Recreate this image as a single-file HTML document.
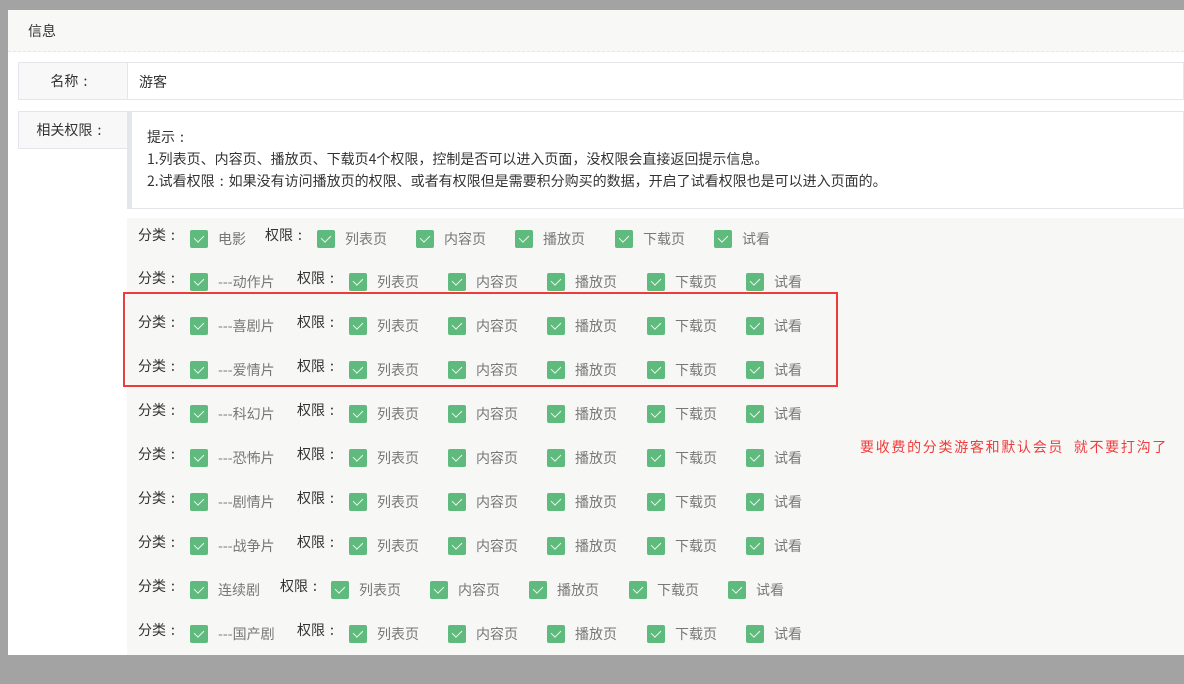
<!DOCTYPE html>
<html><head><meta charset="utf-8"><style>
*{margin:0;padding:0;box-sizing:border-box}
body{width:1184px;height:684px;background:#a3a3a3;position:relative;overflow:hidden;font-family:"Noto Sans CJK SC","Liberation Sans",sans-serif;font-size:14px;color:#333}
.a{position:absolute;white-space:nowrap}
b{display:inline-block;width:14px;text-align:center;font-weight:normal}
#dlg{position:absolute;left:8px;top:10px;width:1176px;height:645px;background:#fff}
#hd{position:absolute;left:0;top:0;width:1176px;height:42px;background:#f8f8f7;border-bottom:1px dashed #e3e6ea}
.cell{position:absolute;border:1px solid #e3e6ea}
.lab{background:#f8f8f8;text-align:center}
#area{position:absolute;left:119px;top:208px;width:1057px;height:437px;background:#f7f7f6}
.r{position:absolute;left:0;width:1184px;height:24px}
.r span{position:absolute;top:2px;line-height:20px}
.r .k{top:-2px;color:#333}
.r .l{color:#777}
.r i{position:absolute;top:3px;width:18px;height:18px;background:#5fba7d;border-radius:2px}
.r i:after{content:"";position:absolute;left:6px;top:3px;width:5px;height:8px;border:solid #fff;border-width:0 1.5px 1.5px 0;transform:rotate(45deg);opacity:.9}
</style></head><body>
<div id="dlg">
<div id="hd"><span class="a" style="left:20px;top:11px;color:#333">信息</span></div>
<div class="cell" style="left:10px;top:52px;width:1166px;height:38px"></div>
<div class="cell lab" style="left:10px;top:52px;width:110px;height:38px;line-height:36px">名称<b>:</b>&nbsp;</div>
<span class="a" style="left:131px;top:62px">游客</span>
<div class="cell lab" style="left:10px;top:101px;width:110px;height:38px;line-height:36px">相关权限<b>:</b>&nbsp;</div>
<div class="cell" style="left:119px;top:101px;width:1057px;height:98px;border-left:5px solid #e3e6ea"></div>
<span class="a" style="left:139px;top:117px">提示<b>:</b></span>
<span class="a" style="left:139px;top:139px">1.列表页、内容页、播放页、下载页4个权限，控制是否可以进入页面，没权限会直接返回提示信息。</span>
<span class="a" style="left:139px;top:161px">2.试看权限<b>:</b>如果没有访问播放页的权限、或者有权限但是需要积分购买的数据，开启了试看权限也是可以进入页面的。</span>
<div id="area"></div>
</div>

<div class="r" style="top:227px"><span class="k" style="left:138px">分类<b>:</b></span><i style="left:190px"></i><span class="l" style="left:218px">电影</span><span class="k" style="left:265px">权限<b>:</b></span><i style="left:317px"></i><span class="l" style="left:345px">列表页</span><i style="left:416px"></i><span class="l" style="left:444px">内容页</span><i style="left:515px"></i><span class="l" style="left:543px">播放页</span><i style="left:615px"></i><span class="l" style="left:643px">下载页</span><i style="left:714px"></i><span class="l" style="left:742px">试看</span></div>

<div class="r" style="top:270px"><span class="k" style="left:138px">分类<b>:</b></span><i style="left:190px"></i><span class="l" style="left:218px">---动作片</span><span class="k" style="left:297px">权限<b>:</b></span><i style="left:349px"></i><span class="l" style="left:377px">列表页</span><i style="left:448px"></i><span class="l" style="left:476px">内容页</span><i style="left:547px"></i><span class="l" style="left:575px">播放页</span><i style="left:647px"></i><span class="l" style="left:675px">下载页</span><i style="left:746px"></i><span class="l" style="left:774px">试看</span></div>

<div class="r" style="top:314px"><span class="k" style="left:138px">分类<b>:</b></span><i style="left:190px"></i><span class="l" style="left:218px">---喜剧片</span><span class="k" style="left:297px">权限<b>:</b></span><i style="left:349px"></i><span class="l" style="left:377px">列表页</span><i style="left:448px"></i><span class="l" style="left:476px">内容页</span><i style="left:547px"></i><span class="l" style="left:575px">播放页</span><i style="left:647px"></i><span class="l" style="left:675px">下载页</span><i style="left:746px"></i><span class="l" style="left:774px">试看</span></div>

<div class="r" style="top:358px"><span class="k" style="left:138px">分类<b>:</b></span><i style="left:190px"></i><span class="l" style="left:218px">---爱情片</span><span class="k" style="left:297px">权限<b>:</b></span><i style="left:349px"></i><span class="l" style="left:377px">列表页</span><i style="left:448px"></i><span class="l" style="left:476px">内容页</span><i style="left:547px"></i><span class="l" style="left:575px">播放页</span><i style="left:647px"></i><span class="l" style="left:675px">下载页</span><i style="left:746px"></i><span class="l" style="left:774px">试看</span></div>

<div class="r" style="top:402px"><span class="k" style="left:138px">分类<b>:</b></span><i style="left:190px"></i><span class="l" style="left:218px">---科幻片</span><span class="k" style="left:297px">权限<b>:</b></span><i style="left:349px"></i><span class="l" style="left:377px">列表页</span><i style="left:448px"></i><span class="l" style="left:476px">内容页</span><i style="left:547px"></i><span class="l" style="left:575px">播放页</span><i style="left:647px"></i><span class="l" style="left:675px">下载页</span><i style="left:746px"></i><span class="l" style="left:774px">试看</span></div>

<div class="r" style="top:446px"><span class="k" style="left:138px">分类<b>:</b></span><i style="left:190px"></i><span class="l" style="left:218px">---恐怖片</span><span class="k" style="left:297px">权限<b>:</b></span><i style="left:349px"></i><span class="l" style="left:377px">列表页</span><i style="left:448px"></i><span class="l" style="left:476px">内容页</span><i style="left:547px"></i><span class="l" style="left:575px">播放页</span><i style="left:647px"></i><span class="l" style="left:675px">下载页</span><i style="left:746px"></i><span class="l" style="left:774px">试看</span></div>

<div class="r" style="top:490px"><span class="k" style="left:138px">分类<b>:</b></span><i style="left:190px"></i><span class="l" style="left:218px">---剧情片</span><span class="k" style="left:297px">权限<b>:</b></span><i style="left:349px"></i><span class="l" style="left:377px">列表页</span><i style="left:448px"></i><span class="l" style="left:476px">内容页</span><i style="left:547px"></i><span class="l" style="left:575px">播放页</span><i style="left:647px"></i><span class="l" style="left:675px">下载页</span><i style="left:746px"></i><span class="l" style="left:774px">试看</span></div>

<div class="r" style="top:534px"><span class="k" style="left:138px">分类<b>:</b></span><i style="left:190px"></i><span class="l" style="left:218px">---战争片</span><span class="k" style="left:297px">权限<b>:</b></span><i style="left:349px"></i><span class="l" style="left:377px">列表页</span><i style="left:448px"></i><span class="l" style="left:476px">内容页</span><i style="left:547px"></i><span class="l" style="left:575px">播放页</span><i style="left:647px"></i><span class="l" style="left:675px">下载页</span><i style="left:746px"></i><span class="l" style="left:774px">试看</span></div>

<div class="r" style="top:578px"><span class="k" style="left:138px">分类<b>:</b></span><i style="left:190px"></i><span class="l" style="left:218px">连续剧</span><span class="k" style="left:280px">权限<b>:</b></span><i style="left:331px"></i><span class="l" style="left:359px">列表页</span><i style="left:430px"></i><span class="l" style="left:458px">内容页</span><i style="left:529px"></i><span class="l" style="left:557px">播放页</span><i style="left:629px"></i><span class="l" style="left:657px">下载页</span><i style="left:728px"></i><span class="l" style="left:756px">试看</span></div>

<div class="r" style="top:622px"><span class="k" style="left:138px">分类<b>:</b></span><i style="left:190px"></i><span class="l" style="left:218px">---国产剧</span><span class="k" style="left:297px">权限<b>:</b></span><i style="left:349px"></i><span class="l" style="left:377px">列表页</span><i style="left:448px"></i><span class="l" style="left:476px">内容页</span><i style="left:547px"></i><span class="l" style="left:575px">播放页</span><i style="left:647px"></i><span class="l" style="left:675px">下载页</span><i style="left:746px"></i><span class="l" style="left:774px">试看</span></div>

<div class="a" style="left:123px;top:292px;width:715px;height:95px;border:2px solid #ee3b3b"></div>
<span class="a" style="left:860px;top:437px;font-size:14px;letter-spacing:1.7px;color:#f03c3c">要收费的分类游客和默认会员&nbsp;&nbsp;就不要打沟了</span>
</body></html>
